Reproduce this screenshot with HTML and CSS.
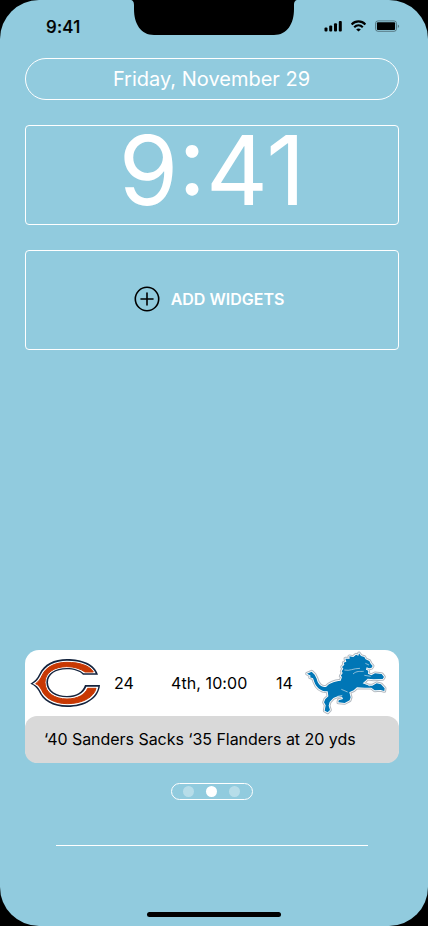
FILE: index.html
```html
<!DOCTYPE html>
<html lang="en">
<head>
<meta charset="utf-8">
<title>Lock Screen</title>
<link rel="stylesheet" href="styles.css">
</head>
<body>
<main class="phone">
  <header class="status">
    <span class="status-time">9:41</span>
    <svg class="notch" width="168" height="35" viewBox="0 0 168 35"><path d="M0 0C3 0 4 2 4 5V9C4 24 11 35 24 35H144C157 35 164 24 164 9V5C164 2 165 0 168 0Z"/></svg>
    <svg class="status-icons" width="76" height="12" viewBox="0 0 76 12">
      <rect x="0.5" y="7.5" width="3" height="4" rx="1"/>
      <rect x="5.2" y="5.5" width="3" height="6" rx="1"/>
      <rect x="10" y="3.2" width="3" height="8.3" rx="1"/>
      <rect x="14.8" y="1" width="3" height="10.5" rx="1"/>
      <g class="wifi"><path d="M27.6 4.4C31.6.4 37.4.4 41.4 4.4M30.2 7.2C32.7 4.7 36.3 4.7 38.8 7.2"/></g>
      <path d="M34.5 11.6L32.2 9.4C33.5 8.1 35.5 8.1 36.8 9.4Z"/>
      <rect class="battery" x="51.5" y="0.9" width="21" height="10.4" rx="2.5"/>
      <rect x="52.9" y="2.2" width="18.2" height="7.8" rx="1"/>
      <path class="cap" d="M73.8 4.4C75.6 5 75.6 7.3 73.8 7.9Z"/>
    </svg>
  </header>
  <section class="date">Friday, November 29</section>
  <section class="clock">9:41</section>
  <section class="widgets">
    <svg width="26" height="26" viewBox="0 0 26 26"><circle cx="13" cy="13" r="11.7"/><path d="M13 7V19M7 13H19"/></svg>
    <span>ADD WIDGETS</span>
  </section>
  <section class="game">
    <div class="score">
      <svg class="bears" width="71" height="50" viewBox="30 39 213 150">
        <path class="navy" d="M31 116C44 109 51 101 58 87C71 57 103 42 141 42C186 42 225 57 234 89H189C180 79 162 73 140 73C107 73 84 89 84 112C84 137 108 153 141 153C168 153 188 142 195 120H240C237 161 195 186 142 186C98 186 67 166 56 138C50 127 43 121 31 116Z"/>
        <path class="edge" d="M38 116C50 110 56 101 62 89C75 61 106 47 141 47C183 47 218 60 227 85H191C180 75 162 69 140 69C105 69 79 86 79 112C79 140 105 157 141 157C170 157 191 145 199 125H235C230 158 192 181 142 181C101 181 71 163 61 138C55 127 49 120 38 116Z"/>
        <path class="orange" d="M47 116C57 109 61 102 67 90C78 65 107 52 141 52C179 52 210 62 220 81H195C181 71 163 65 140 65C102 65 75 84 75 112C75 143 103 162 141 162C173 162 195 149 203 130H228C222 156 188 176 142 176C104 176 75 159 66 137C60 125 55 120 47 116Z"/>
      </svg>
      <span class="home-score">24</span>
      <span class="period">4th, 10:00</span>
      <span class="away-score">14</span>
      <svg class="lions" width="82" height="64" viewBox="9 9 246 192">
        <defs><path id="lion" d="M15 77L29 71L38 80L44 92C47 107 58 120 73 116C82 105 97 100 116 98L120 86L116 84L122 75L119 70L124 62L120 57L127 50L125 44L133 41L130 32L143 32L142 25L154 27L162 20L169 23L171 16L177 24L187 27L191 34L202 39L206 47L212 54L208 60L201 61L194 58L192 65L199 68L198 77L208 82L219 76L239 78L246 87L242 93L215 94L197 92L190 99L182 106L202 113L211 113L224 106L237 109L248 121L247 129L236 126L218 127L208 119L188 119L165 118L155 127L142 133L146 148L143 157L128 165L109 163L110 157L123 153L120 146L107 145L94 150L83 162L80 173L84 186L77 193L68 188L71 172L66 163L70 153L79 145L77 130C57 131 43 119 37 102L33 91L24 88L26 83Z"/></defs>
        <use class="lion-edge" href="#lion"/>
        <use class="lion-gap" href="#lion"/>
        <use class="lion-body" href="#lion"/>
        <path class="lion-line" d="M127 66C144 70 153 61 174 61M153 78C164 68 173 71 185 70M187 82L206 85M186 102L203 114M137 132L118 124M107 145L121 142M190 46L201 51"/>
      </svg>
    </div>
    <div class="play">‘40 Sanders Sacks ‘35 Flanders at 20 yds</div>
  </section>
  <nav class="dots"><i></i><i class="on"></i><i></i></nav>
  <hr class="rule">
  <footer class="home-bar"></footer>
</main>
</body>
</html>
```
FILE: styles.css
```css
* { box-sizing: border-box; }
body { margin: 0; background: #000; font-family: Inter, "Liberation Sans", sans-serif; }
.phone {
  width: 428px; height: 926px; padding: 0 29px 0 25px;
  background: #91cbde; border-radius: 39px; overflow: hidden;
  display: flex; flex-direction: column;
}
.status { height: 58px; margin: 0 -29px 0 -25px; display: flex; align-items: flex-start; flex: none; }
.status-time { width: 84px; margin-left: 46px; padding-top: 17px; font-size: 17px; line-height: 20px; font-weight: 500; letter-spacing: 0.2px; -webkit-text-stroke: .2px #000; }
.status-icons { margin: 20px 0 0 26px; }
.wifi { fill: none; stroke: #000; stroke-width: 2.1; }
.battery { fill: none; stroke: #000; stroke-opacity: .4; }
.cap { fill-opacity: .4; }
.date, .clock, .widgets { border: 1px solid #fff; color: #fff; flex: none; display: flex; justify-content: center; }
.date { height: 42px; padding-right: 1px; border-radius: 21px; font-size: 20px; line-height: 40px; }
.clock { height: 100px; margin-top: 25px; border-radius: 4px; font-size: 96px; line-height: 88px; }
.widgets { height: 100px; margin-top: 25px; border-radius: 4px; align-items: center; gap: 11px; padding: 0 6px 2px 0; font-size: 16px; font-weight: 600; }
.widgets svg { fill: none; stroke: #000; stroke-width: 1.6; stroke-linecap: round; }
.game { height: 113px; margin-top: 300px; flex: none; background: #fff; border-radius: 14px; display: flex; flex-direction: column; font-size: 16px; color: #000; }
.score { height: 66px; display: flex; align-items: flex-start; line-height: 20px; }
.score span { margin-top: 23px; white-space: nowrap; }
.bears { margin: 8px 13px 0 5px; }
.navy { fill: #14233d; }
.edge { fill: #fff; }
.orange { fill: #c83803; stroke: #c83803; stroke-width: 3; }
.home-score { width: 57px; }
.period { width: 105px; letter-spacing: .08px; }
.away-score { width: 29px; }
.lions { margin-top: 1px; overflow: visible; }
.lion-edge { fill: #b3bac1; stroke: #b3bac1; stroke-width: 11; stroke-linejoin: round; }
.lion-gap { fill: #fff; stroke: #fff; stroke-width: 5; stroke-linejoin: round; }
.lion-body { fill: #0076b6; }
.lion-line { fill: none; stroke: #d5e1e9; stroke-width: 2; }
.play { height: 47px; padding-left: 19px; background: #d9d9d9; border-radius: 12px; line-height: 47px; letter-spacing: -.04px; }
.dots { width: 82px; height: 17px; margin: 20px 0 0 146px; border: 1px solid #fff; border-radius: 9px; display: flex; justify-content: center; align-items: center; gap: 12px; padding-right: 1px; flex: none; }
.dots i { width: 11px; height: 11px; border-radius: 50%; background: #fff; opacity: .35; }
.dots .on { opacity: 1; }
.rule { width: 312px; height: 1px; border: 0; background: #fff; margin: 45px 0 0 31px; flex: none; }
.home-bar { width: 134px; height: 5px; margin: 66px 0 0 122px; border-radius: 3px; background: #000; flex: none; }
```
